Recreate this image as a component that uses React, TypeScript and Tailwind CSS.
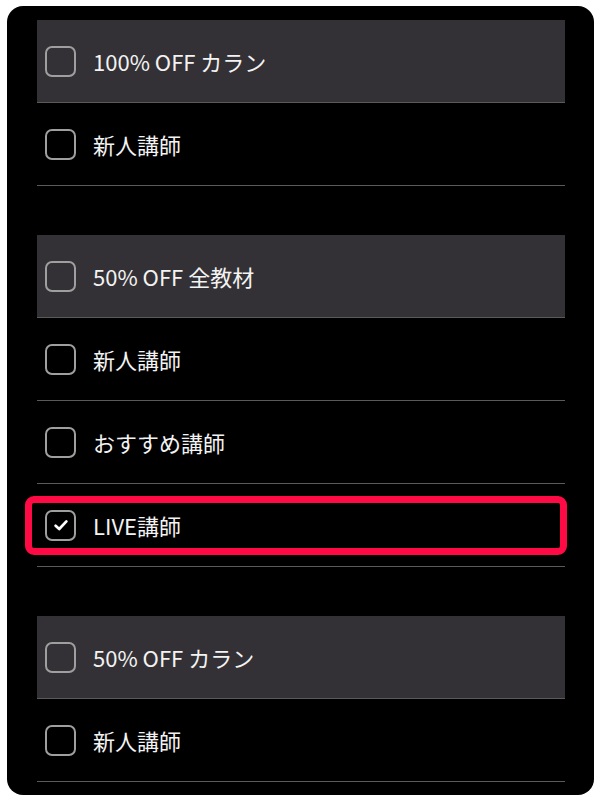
import React from 'react'

type Row = { label: string, header?: boolean, checked?: boolean, highlight?: boolean }

const sections: Row[][] = [
    [
        { label: '100% OFF カラン', header: true },
        { label: '新人講師' },
    ],
    [
        { label: '50% OFF 全教材', header: true },
        { label: '新人講師' },
        { label: 'おすすめ講師' },
        { label: 'LIVE講師', checked: true, highlight: true },
    ],
    [
        { label: '50% OFF カラン', header: true },
        { label: '新人講師' },
    ],
]

function Checkbox({ checked }: { checked?: boolean }) {
    return (
        <span className="flex h-[31px] w-[31px] shrink-0 items-center justify-center rounded-[7px] border-2 border-[#9f9f9f]">
            {checked && (
                <svg viewBox="0 0 16 16" className="h-[18px] w-[18px]" fill="none" stroke="#ffffff" strokeWidth="2.4" strokeLinecap="round" strokeLinejoin="round">
                    <polyline points="3.2,8.6 6.4,11.6 12.8,4.8" />
                </svg>
            )}
        </span>
    )
}

function FilterRow({ row }: { row: Row }) {
    return (
        <div className={`relative flex h-[83px] items-center gap-[17px] border-b border-[#5a5a5a] pl-[8px] ${row.header ? 'bg-[#333135]' : ''}`}>
            <Checkbox checked={row.checked} />
            <span className="text-[22px] leading-none text-[#f3f3f3]">{row.label}</span>
            {row.highlight && (
                <div className="pointer-events-none absolute -left-[12px] -right-[2px] top-[12px] bottom-[11px] rounded-[9px] border-[7px] border-[#ff0a45]"></div>
            )}
        </div>
    )
}

export default function App() {
    return (
        <div className="min-h-screen bg-white pt-[6px] pl-[7px] pr-[10px] pb-[9px]" style={{ fontFamily: '"Noto Sans CJK JP", "Noto Sans", sans-serif' }}>
            <div className="flex flex-col gap-[49px] rounded-[16px] bg-black pl-[30px] pr-[29px] pt-[14px] pb-[13px]">
                {sections.map((rows, i) => (
                    <div key={i} className="flex flex-col">
                        {rows.map((row, j) => (
                            <FilterRow key={j} row={row} />
                        ))}
                    </div>
                ))}
            </div>
        </div>
    )
}
